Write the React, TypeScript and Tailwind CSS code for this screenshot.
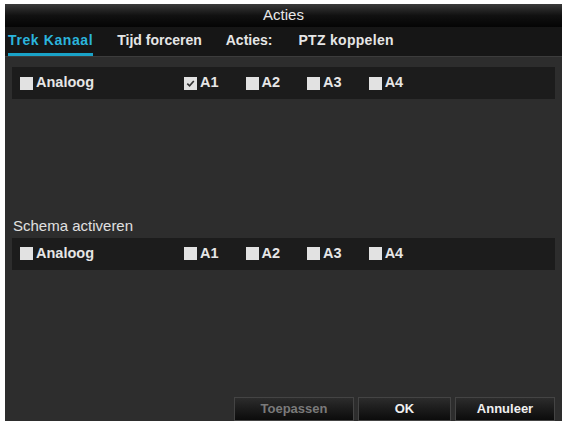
import React from "react";

const Box = ({ checked }: { checked?: boolean }) => (
  <span className="inline-flex h-[13px] w-[13px] items-center justify-center bg-[#e2e2e2]">
    {checked && (
      <svg viewBox="0 0 12 12" className="h-[11px] w-[11px]">
        <path d="M2.5 6.2 L5 8.6 L9.6 3.2" fill="none" stroke="#333" strokeWidth="1.8" />
      </svg>
    )}
  </span>
);

const Item = ({ label, checked }: { label: string; checked?: boolean }) => (
  <span className="flex items-center gap-[3px]">
    <Box checked={checked} />
    <span>{label}</span>
  </span>
);

const ChannelRow = ({ firstChecked }: { firstChecked?: boolean }) => (
  <div className="flex h-[32px] items-center bg-[#1c1c1c] pl-[8px] text-[14.5px] font-bold text-[#e6e6e6]">
    <div className="w-[164px]">
      <Item label="Analoog" />
    </div>
    <div className="flex gap-[27px]">
      <Item label="A1" checked={firstChecked} />
      <Item label="A2" />
      <Item label="A3" />
      <Item label="A4" />
    </div>
  </div>
);

const Btn = ({ label, dim, w }: { label: string; dim?: boolean; w: string }) => (
  <button
    className={`${w} h-[24px] border border-[#444] bg-gradient-to-b from-[#2c2c2c] to-[#0c0c0c] text-[13px] font-bold ${
      dim ? "text-[#7a7a7a]" : "text-[#f0f0f0]"
    }`}
  >
    {label}
  </button>
);

export default function App() {
  return (
    <div
      className="h-[426px] w-[568px] bg-white pl-[5px] pt-[4px]"
      style={{ fontFamily: "'Liberation Sans', Arial, sans-serif" }}
    >
      <div className="flex h-[417px] w-[557px] flex-col bg-[#2d2d2d]">
        <div className="flex h-[23px] items-center justify-center bg-gradient-to-b from-[#3a3a3a] via-[#111] to-[#050505] text-[15px] text-[#e8e8e8]">
          Acties
        </div>
        <div className="flex h-[30px] items-end gap-[24px] border-b border-[#3c3c3c] bg-[#161616] pl-[3px] text-[14px] font-bold text-[#e6e6e6]">
          <span className="border-b-[3px] border-[#1aa3c8] pb-[2px] tracking-[0.6px] text-[#2bb4dc]">Trek Kanaal</span>
          <span className="pb-[5px]">Tijd forceren</span>
          <span className="pb-[5px]">Acties:</span>
          <span className="pb-[5px] pl-[2px] tracking-[0.3px]">PTZ koppelen</span>
        </div>
        <div className="flex flex-1 flex-col px-[7px] pt-[10px]">
          <ChannelRow firstChecked />
          <div className="mt-[116px] pl-[1px] text-[15px] text-[#e0e0e0]">Schema activeren</div>
          <ChannelRow />
          <div className="mt-auto flex justify-end gap-[4px]">
            <Btn label="Toepassen" dim w="w-[120px]" />
            <Btn label="OK" w="w-[93px]" />
            <Btn label="Annuleer" w="w-[100px]" />
          </div>
        </div>
      </div>
    </div>
  );
}
